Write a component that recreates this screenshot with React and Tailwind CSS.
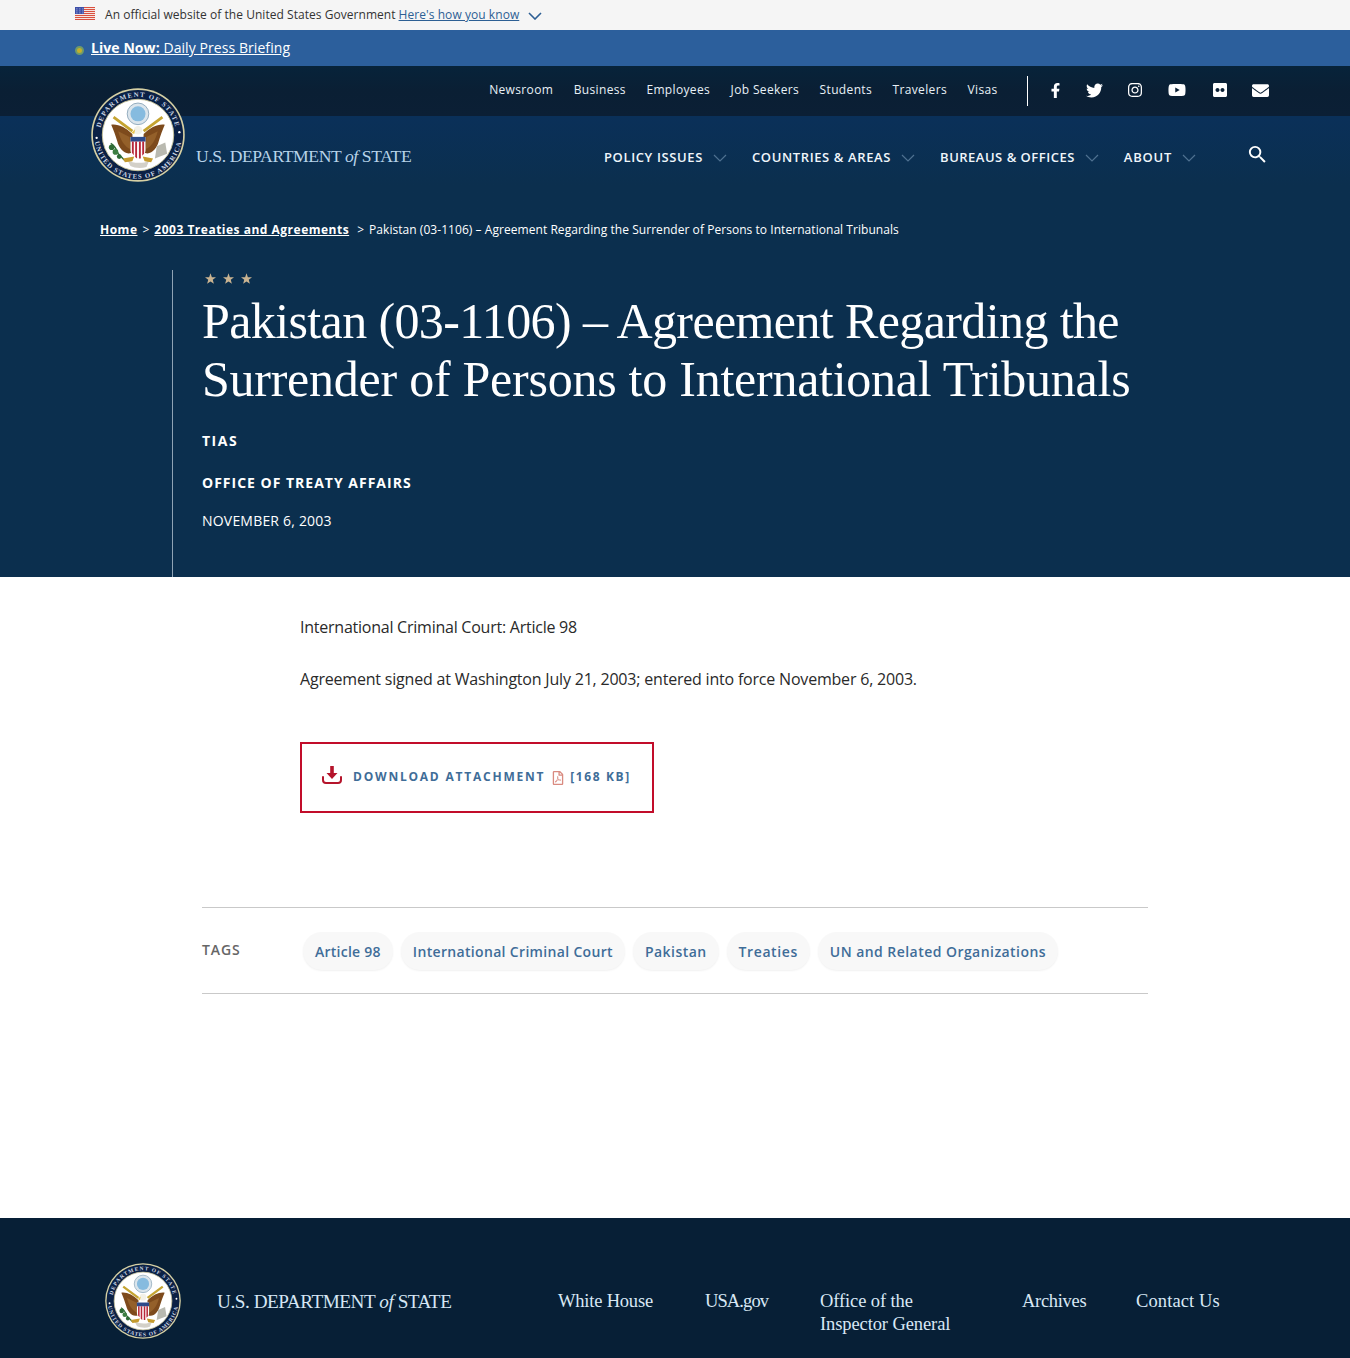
import React from "react";
import { FaFacebookF, FaTwitter, FaInstagram, FaYoutube, FaFlickr, FaEnvelope, FaRegFilePdf } from "react-icons/fa";
import { MdSearch } from "react-icons/md";

function Seal({ size, id, className }) {
  return (
    <svg width={size} height={size} viewBox="0 0 200 200" className={className}>
      <defs>
        <path id={`${id}-top`} d="M 19 100 A 81 81 0 0 1 181 100" />
        <path id={`${id}-bot`} d="M 7 100 A 93 93 0 0 0 193 100" />
      </defs>
      <circle cx="100" cy="100" r="99.5" fill="#d6d0a4" />
      <circle cx="100" cy="100" r="96" fill="#0b2145" />
      <text fontSize="14.5" fontFamily="Liberation Serif, serif" fontWeight="700" fill="#cfd8e6" letterSpacing="2.6">
        <textPath href={`#${id}-top`} startOffset="50%" textAnchor="middle">DEPARTMENT OF STATE</textPath>
      </text>
      <text fontSize="14.5" fontFamily="Liberation Serif, serif" fontWeight="700" fill="#cfd8e6" letterSpacing="2.2">
        <textPath href={`#${id}-bot`} startOffset="50%" textAnchor="middle">UNITED STATES OF AMERICA</textPath>
      </text>
      <circle cx="12" cy="106" r="2.5" fill="#fff" />
      <circle cx="188" cy="94" r="2.5" fill="#fff" />
      <circle cx="100" cy="100" r="76" fill="#fff" stroke="#c9c39a" strokeWidth="2" />
      <circle cx="100" cy="55" r="23" fill="#dbe5ec" stroke="#8fa9bc" strokeWidth="2" />
      <circle cx="100" cy="55" r="16" fill="#86bbdf" />
      <path d="M48 62 L88 92 M152 62 L112 92" stroke="#c5a431" strokeWidth="6" />
      <path d="M43 78 C58 76 74 84 88 98 L90 136 C74 146 60 130 56 114 C52 100 48 90 43 78Z" fill="#7d4a1c" />
      <path d="M157 78 C142 76 126 84 112 98 L110 136 C126 146 140 130 144 114 C148 100 152 90 157 78Z" fill="#7d4a1c" />
      <path d="M58 92 L82 104 L84 130 C72 126 62 110 58 92Z" fill="#94602a" />
      <path d="M142 92 L118 104 L116 130 C128 126 138 110 142 92Z" fill="#94602a" />
      <circle cx="100" cy="90" r="9" fill="#f3f1e8" />
      <path d="M94 88 L86 95 L92 98Z" fill="#e8c24a" />
      <path d="M84 104 H116 V132 C116 142 106 148 100 152 C94 148 84 142 84 132Z" fill="#fff" />
      <path d="M84 104 H116 V114 H84Z" fill="#2d4a8a" />
      <path d="M87 114 H91 V143 L87 138Z M94 114 H98 V150 L94 147Z M102 114 H106 V150 L102 150Z M109 114 H113 V140 L109 144Z" fill="#b8283a" />
      <path d="M42 118 C50 122 54 130 58 140 C64 146 68 150 72 154" stroke="#2e6b35" strokeWidth="3" fill="none" />
      <circle cx="44" cy="126" r="6" fill="#2e6b35" />
      <circle cx="52" cy="136" r="6" fill="#3d7f42" />
      <circle cx="60" cy="146" r="5" fill="#2e6b35" />
      <path d="M140 124 L158 116 L162 140 L136 150Z" fill="#b9b9b0" />
      <path d="M78 154 C88 160 112 162 124 154 L118 168 C106 172 92 170 84 166Z" fill="#d3d0c8" />
      <path d="M68 150 L92 146 L88 156 L72 158Z M132 150 L110 146 L114 156 L128 158Z" fill="#c59b2e" />
    </svg>
  );
}

function Wordmark({ className }) {
  return (
    <span className={`font-['Liberation_Serif',serif] whitespace-nowrap ${className}`}>
      U.S. DEPARTMENT <i>of</i> STATE
    </span>
  );
}

function Flag() {
  return (
    <svg width="20" height="13" viewBox="0 0 20 13">
      <rect width="20" height="13" fill="#f6e4df" />
      {[0, 2, 4, 6, 8, 10, 12].map((y) => (
        <rect key={y} y={y} width="20" height="1" fill="#d9503f" />
      ))}
      <rect width="9" height="7" fill="#3d4fa8" />
      {[1.5, 4.5, 7.5].map((x) => [1.5, 3.5, 5.5].map((y) => (
        <rect key={`${x}${y}`} x={x} y={y} width="0.8" height="0.8" fill="#fff" />
      )))}
    </svg>
  );
}

function Star() {
  return (
    <svg width="11" height="11" viewBox="0 0 24 23">
      <path d="M12 0 L15 8.5 L24 8.8 L16.9 14.2 L19.4 23 L12 17.8 L4.6 23 L7.1 14.2 L0 8.8 L9 8.5Z" fill="#c9b391" />
    </svg>
  );
}

const util = ["Newsroom", "Business", "Employees", "Job Seekers", "Students", "Travelers", "Visas"];
const nav = [
  ["Policy Issues", "tracking-[0.62px]"],
  ["Countries & Areas", "tracking-[0.62px]"],
  ["Bureaus & Offices", "tracking-[0.5px]"],
  ["About", "tracking-[0.8px]"],
];
const tags = [
  ["Article 98", "tracking-[0.25px]", "ml-[1px]"],
  ["International Criminal Court", "tracking-[0.33px]", "ml-0"],
  ["Pakistan", "tracking-[0.45px]", "ml-0"],
  ["Treaties", "tracking-[0.6px]", "ml-0"],
  ["UN and Related Organizations", "tracking-[0.45px]", "ml-0"],
];
const foot = [
  [["White House"], "tracking-[-0.2px]"],
  [["USA.gov"], "tracking-[-0.9px]"],
  [["Office of the", "Inspector General"], "tracking-[-0.1px]"],
  [["Archives"], "tracking-[-0.3px]"],
  [["Contact Us"], "tracking-[0.1px]"],
];

export default function App() {
  return (
    <div className="font-['Open_Sans',sans-serif] w-[1350px] h-[1358px] overflow-hidden bg-white">
      <div className="h-[30px] bg-[#f5f5f5] pl-[75px] flex items-center text-[12px] text-[#333]">
        <span className="-mt-[4px] flex"><Flag /></span>
        <span className="ml-[10px] whitespace-nowrap tracking-[0.04px]">An official website of the United States Government</span>
        <a className="ml-[3px] text-[#2d5f94] underline whitespace-nowrap tracking-[0.06px]">Here's how you know</a>
        <svg width="14" height="8" viewBox="0 0 14 8" className="ml-[9px] mt-[2px]"><path d="M1 1 L7 7 L13 1" fill="none" stroke="#2d5f94" strokeWidth="1.6" /></svg>
      </div>

      <div className="h-[36px] bg-[#2c5f9c] pl-[75px] flex items-center text-[14px] text-white">
        <span className="w-[9px] h-[9px] rounded-full bg-[#c4b02c] border-2 border-[#6f9a6a] mt-[4px]" />
        <a className="ml-[7px] -mt-[1px] underline whitespace-nowrap tracking-[0.07px]"><b className="font-bold">Live Now:</b> Daily Press Briefing</a>
      </div>

      <header className="relative">
        <div className="h-[50px] bg-linear-to-b from-[#07233a] via-[#0a1f34] to-[#0b1f35] flex items-center justify-end pr-[81px]">
          <nav className="flex gap-[20.5px] text-[12px] tracking-[0.35px] text-[#e8f0f6] mr-[29px] -mt-[2px]">
            {util.map((u) => <a key={u} className="whitespace-nowrap">{u}</a>)}
          </nav>
          <div className="w-px h-[30px] bg-white mr-[20.5px]" />
          <div className="flex items-center gap-[24.7px] text-white text-[16px] -mt-[2px]">
            <FaFacebookF size={15} />
            <FaTwitter size={17} className="-ml-[2px]" />
            <FaInstagram size={16} />
            <FaYoutube size={18} />
            <FaFlickr size={16} className="ml-[1.5px]" />
            <FaEnvelope size={17} className="-ml-[1px]" />
          </div>
        </div>

        <a className="absolute left-[91px] top-[22px] flex items-center">
          <Seal size={94} id="h" />
          <Wordmark className="ml-[11px] mt-[42px] text-[17.6px] tracking-[-0.4px] text-[#b7d3e9]" />
        </a>

        <div className="bg-linear-to-b from-[#0a3059] via-[#0b2f4e] via-15% to-[#0b2f4e] h-[461px] flex flex-col">
          <div className="flex items-center h-[82px] pl-[604px] text-white">
            {nav.map(([n, t]) => (
              <div key={n} className="flex items-center mr-[25px] mt-[1px]">
                <span className={`text-[13px] font-semibold uppercase whitespace-nowrap text-[#f0f6fb] ${t}`}>{n}</span>
                <svg width="14" height="8" viewBox="0 0 14 8" className="ml-[10px]"><path d="M1 1 L7 7 L13 1" fill="none" stroke="#4f7191" strokeWidth="1.2" /></svg>
              </div>
            ))}
            <MdSearch size={23} className="ml-[25px] -mt-[5px]" />
          </div>

          <div className="pl-[100px] mt-[23px] h-[18px] flex items-center text-[12px] text-white whitespace-nowrap">
            <a className="font-bold underline tracking-[0.5px]">Home</a>
            <span className="mx-[5px]">&gt;</span>
            <a className="font-bold underline tracking-[0.5px]">2003 Treaties and Agreements</a>
            <span className="ml-[8px] mr-[5px]">&gt;</span>
            <span className="tracking-[0.05px]">Pakistan (03-1106) – Agreement Regarding the Surrender of Persons to International Tribunals</span>
          </div>

          <div className="ml-[172px] mt-[31px] flex-1 border-l border-[#8fa3b5] pl-[29px] text-white">
            <div className="h-[18px] pl-[3px] -mt-[1px] flex items-center gap-[7px]"><Star /><Star /><Star /></div>
            <h1 className="font-['Liberation_Serif',serif] text-[50px] leading-[58px] mt-[5px] font-normal whitespace-nowrap">
              <span className="block tracking-[-0.61px]">Pakistan (03-1106) – Agreement Regarding the</span>
              <span className="block tracking-[-0.25px]">Surrender of Persons to International Tribunals</span>
            </h1>
            <div className="mt-[23px] text-[14px] leading-[20px] font-bold tracking-[1.5px]">TIAS</div>
            <div className="mt-[22px] text-[14px] leading-[20px] font-bold tracking-[1px]">OFFICE OF TREATY AFFAIRS</div>
            <div className="mt-[18px] text-[14px] leading-[20px] tracking-[0.2px]">NOVEMBER 6, 2003</div>
          </div>
        </div>
      </header>

      <main className="h-[641px]">
        <div className="pl-[300px] pt-[37px] text-[16px] leading-[26px] text-[#2a2a2a]">
          <p className="tracking-[-0.24px]">International Criminal Court: Article 98</p>
          <p className="mt-[26px] tracking-[-0.2px]">Agreement signed at Washington July 21, 2003; entered into force November 6, 2003.</p>
        </div>
        <div className="ml-[300px] mt-[50px] w-[354px] h-[71px] border-2 border-[#c20d2a] flex items-center pl-[20px] text-[12px] font-bold text-[#3f6d98] whitespace-nowrap">
          <svg width="20" height="18" viewBox="0 0 20 18" className="-mt-[5px] text-[#b5142b]">
            <path d="M1 11 V14 C1 15.8 2.2 17 4 17 H16 C17.8 17 19 15.8 19 14 V11" fill="none" stroke="currentColor" strokeWidth="2" strokeLinecap="round" />
            <path d="M8.2 0 H11.8 V7 H15.5 L10 13 L4.5 7 H8.2Z" fill="currentColor" />
          </svg>
          <span className="ml-[11px] -mt-[2px] tracking-[1.78px]">DOWNLOAD ATTACHMENT</span>
          <FaRegFilePdf size={14} className="text-[#d98a80] ml-[6px]" />
          <span className="ml-[5px] -mt-[2px] tracking-[1.6px]">[168 KB]</span>
        </div>
        <div className="ml-[202px] w-[946px] mt-[94px] h-[87px] border-y border-[#c9c9c9] flex items-center">
          <span className="w-[100px] text-[14px] font-semibold tracking-[0.9px] text-[#666] -mt-[2px]">TAGS</span>
          <div className="flex gap-[8px] mt-[1px]">
            {tags.map(([t, tr, m]) => (
              <span key={t} className={`h-[38px] px-[12px] rounded-[19px] bg-[#f8f8f8] shadow-[0_1px_2px_rgba(0,0,0,0.06)] flex items-center text-[14px] font-semibold text-[#3f6d98] whitespace-nowrap ${tr} ${m}`}>{t}</span>
            ))}
          </div>
        </div>
      </main>

      <footer className="h-[140px] bg-[#071f36] pt-[72px] relative pl-[558px] font-['Liberation_Serif',serif] text-[18.5px] leading-[23px] text-[#d9e8f5]">
        <a className="absolute left-[105px] top-[45px] flex items-center">
          <Seal size={76} id="f" />
          <Wordmark className="ml-[36px] text-[19.2px] tracking-[-0.45px] text-[#d5e6f4]" />
        </a>
        <div className="grid grid-cols-[96px_64px_151px_63px_83px] gap-x-[51px]">
          {foot.map(([f, t]) => (
            <a key={f[0]} className={`whitespace-nowrap ${t}`}>
              {f.map((l) => <div key={l}>{l}</div>)}
            </a>
          ))}
        </div>
      </footer>
    </div>
  );
}
